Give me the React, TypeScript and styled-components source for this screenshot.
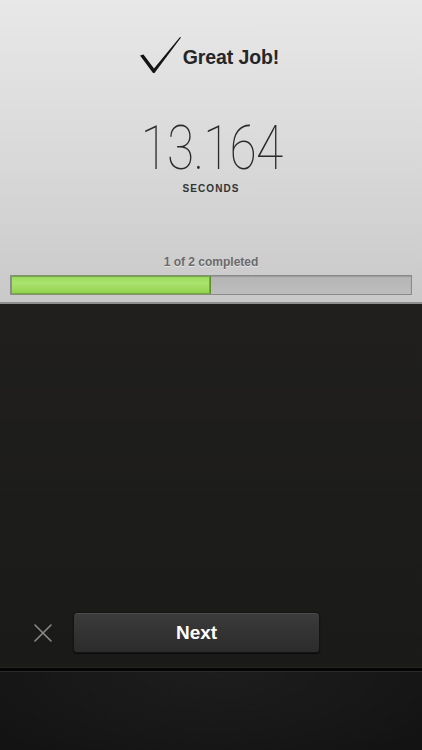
import React from "react";
import styled, { createGlobalStyle } from "styled-components";

const GlobalStyle = createGlobalStyle`
  html, body {
    margin: 0;
    padding: 0;
    background: #161616;
  }
  * {
    box-sizing: border-box;
  }
`;

const Screen = styled.div`
  width: 422px;
  height: 750px;
  display: flex;
  flex-direction: column;
  overflow: hidden;
  font-family: "Liberation Sans", Arial, sans-serif;
`;

const ResultPanel = styled.section`
  height: 304px;
  display: flex;
  flex-direction: column;
  align-items: center;
  padding-top: 36px;
  background: linear-gradient(180deg, #e8e8e8 0%, #d8d8d8 55%, #c9c9c9 100%);
  border-bottom: 2px solid #8e8e8e;
  box-shadow: 0 1px 0 #0c0c0c;
`;

const Headline = styled.div`
  display: flex;
  align-items: center;
  gap: 0;
  height: 40px;
  margin-left: -4px;
`;

const Title = styled.h1`
  margin: 0;
  font-size: 19.5px;
  font-weight: bold;
  color: #262626;
  letter-spacing: -0.1px;
  padding-top: 3px;
`;

const Time = styled.div`
  margin-top: 44px;
  font-family: Roboto, "Liberation Sans", sans-serif;
  font-weight: 100;
  font-size: 62px;
  line-height: 56px;
  color: #2a2a2a;
  letter-spacing: -1px;
  transform: scaleX(0.8);
`;

const Unit = styled.div`
  margin-top: 7px;
  font-size: 10px;
  font-weight: bold;
  letter-spacing: 1.1px;
  color: #333;
`;

const Progress = styled.div`
  margin-top: auto;
  width: 100%;
  padding: 0 10px 7px;
  display: flex;
  flex-direction: column;
  align-items: center;
  gap: 6px;
`;

const ProgressLabel = styled.div`
  font-size: 12px;
  font-weight: bold;
  color: #6a6a6a;
  text-shadow: 0 1px 0 rgba(255, 255, 255, 0.5);
`;

const Track = styled.div`
  width: 100%;
  height: 20px;
  border: 1px solid #8a8a8a;
  background: linear-gradient(180deg, #b5b5b5 0%, #bdbdbd 100%);
  box-shadow: inset 0 1px 1px rgba(0, 0, 0, 0.15);
`;

const Fill = styled.div`
  height: 100%;
  background: linear-gradient(180deg, #98dc5a 0%, #ace26f 40%, #8fd24a 100%);
  border-right: 1px solid #5e8f2c;
  box-shadow: inset 0 0 0 1px #6fae36;
`;

const Workspace = styled.main`
  flex: 1;
  display: flex;
  flex-direction: column;
  justify-content: flex-end;
  background: linear-gradient(180deg, #201f1e 0%, #1c1c1b 60%, #1a1a19 100%);
  border-bottom: 1px solid #262626;
`;

const ActionRow = styled.div`
  display: flex;
  align-items: center;
  padding: 0 0 14px 32px;
  gap: 19px;
`;

const CloseButton = styled.button`
  width: 22px;
  height: 22px;
  padding: 0;
  border: none;
  background: none;
  display: flex;
  align-items: center;
  justify-content: center;
`;

const NextButton = styled.button`
  width: 247px;
  height: 41px;
  border-radius: 4px;
  border: 1px solid #141414;
  background: linear-gradient(180deg, #3c3c3c 0%, #333 50%, #2c2c2c 100%);
  box-shadow: inset 0 1px 0 rgba(255, 255, 255, 0.08), 0 1px 1px rgba(0, 0, 0, 0.6);
  color: #fff;
  font-family: "Liberation Sans", Arial, sans-serif;
  font-size: 19px;
  font-weight: bold;
  padding: 0;
`;

const BottomBar = styled.footer`
  height: 82px;
  border-top: 3px solid #050505;
  background: radial-gradient(ellipse at 50% 0%, #1d1d1d 0%, #171717 60%, #121212 100%);
  box-shadow: inset 0 1px 0 #2a2a2a;
`;

const Check = () => (
  <svg width="44" height="40" viewBox="0 0 44 40">
    <path d="M1 19.5 L4.5 18.5 L15 32.5 L41 1 L42 1.5 L15.5 37 L14 37 Z" fill="#141414" />
  </svg>
);

const CloseIcon = () => (
  <svg width="18" height="18" viewBox="0 0 18 18">
    <path d="M1 1 L17 17 M17 1 L1 17" stroke="#8a8a8a" strokeWidth="1.6" strokeLinecap="round" />
  </svg>
);

export default function App() {
  const done = 1;
  const total = 2;
  return (
    <>
      <GlobalStyle />
      <Screen>
        <ResultPanel>
          <Headline>
            <Check />
            <Title>Great Job!</Title>
          </Headline>
          <Time>13.164</Time>
          <Unit>SECONDS</Unit>
          <Progress>
            <ProgressLabel>
              {done} of {total} completed
            </ProgressLabel>
            <Track>
              <Fill style={{ width: `${(done / total) * 100}%` }} />
            </Track>
          </Progress>
        </ResultPanel>
        <Workspace>
          <ActionRow>
            <CloseButton aria-label="Close">
              <CloseIcon />
            </CloseButton>
            <NextButton>Next</NextButton>
          </ActionRow>
        </Workspace>
        <BottomBar />
      </Screen>
    </>
  );
}
